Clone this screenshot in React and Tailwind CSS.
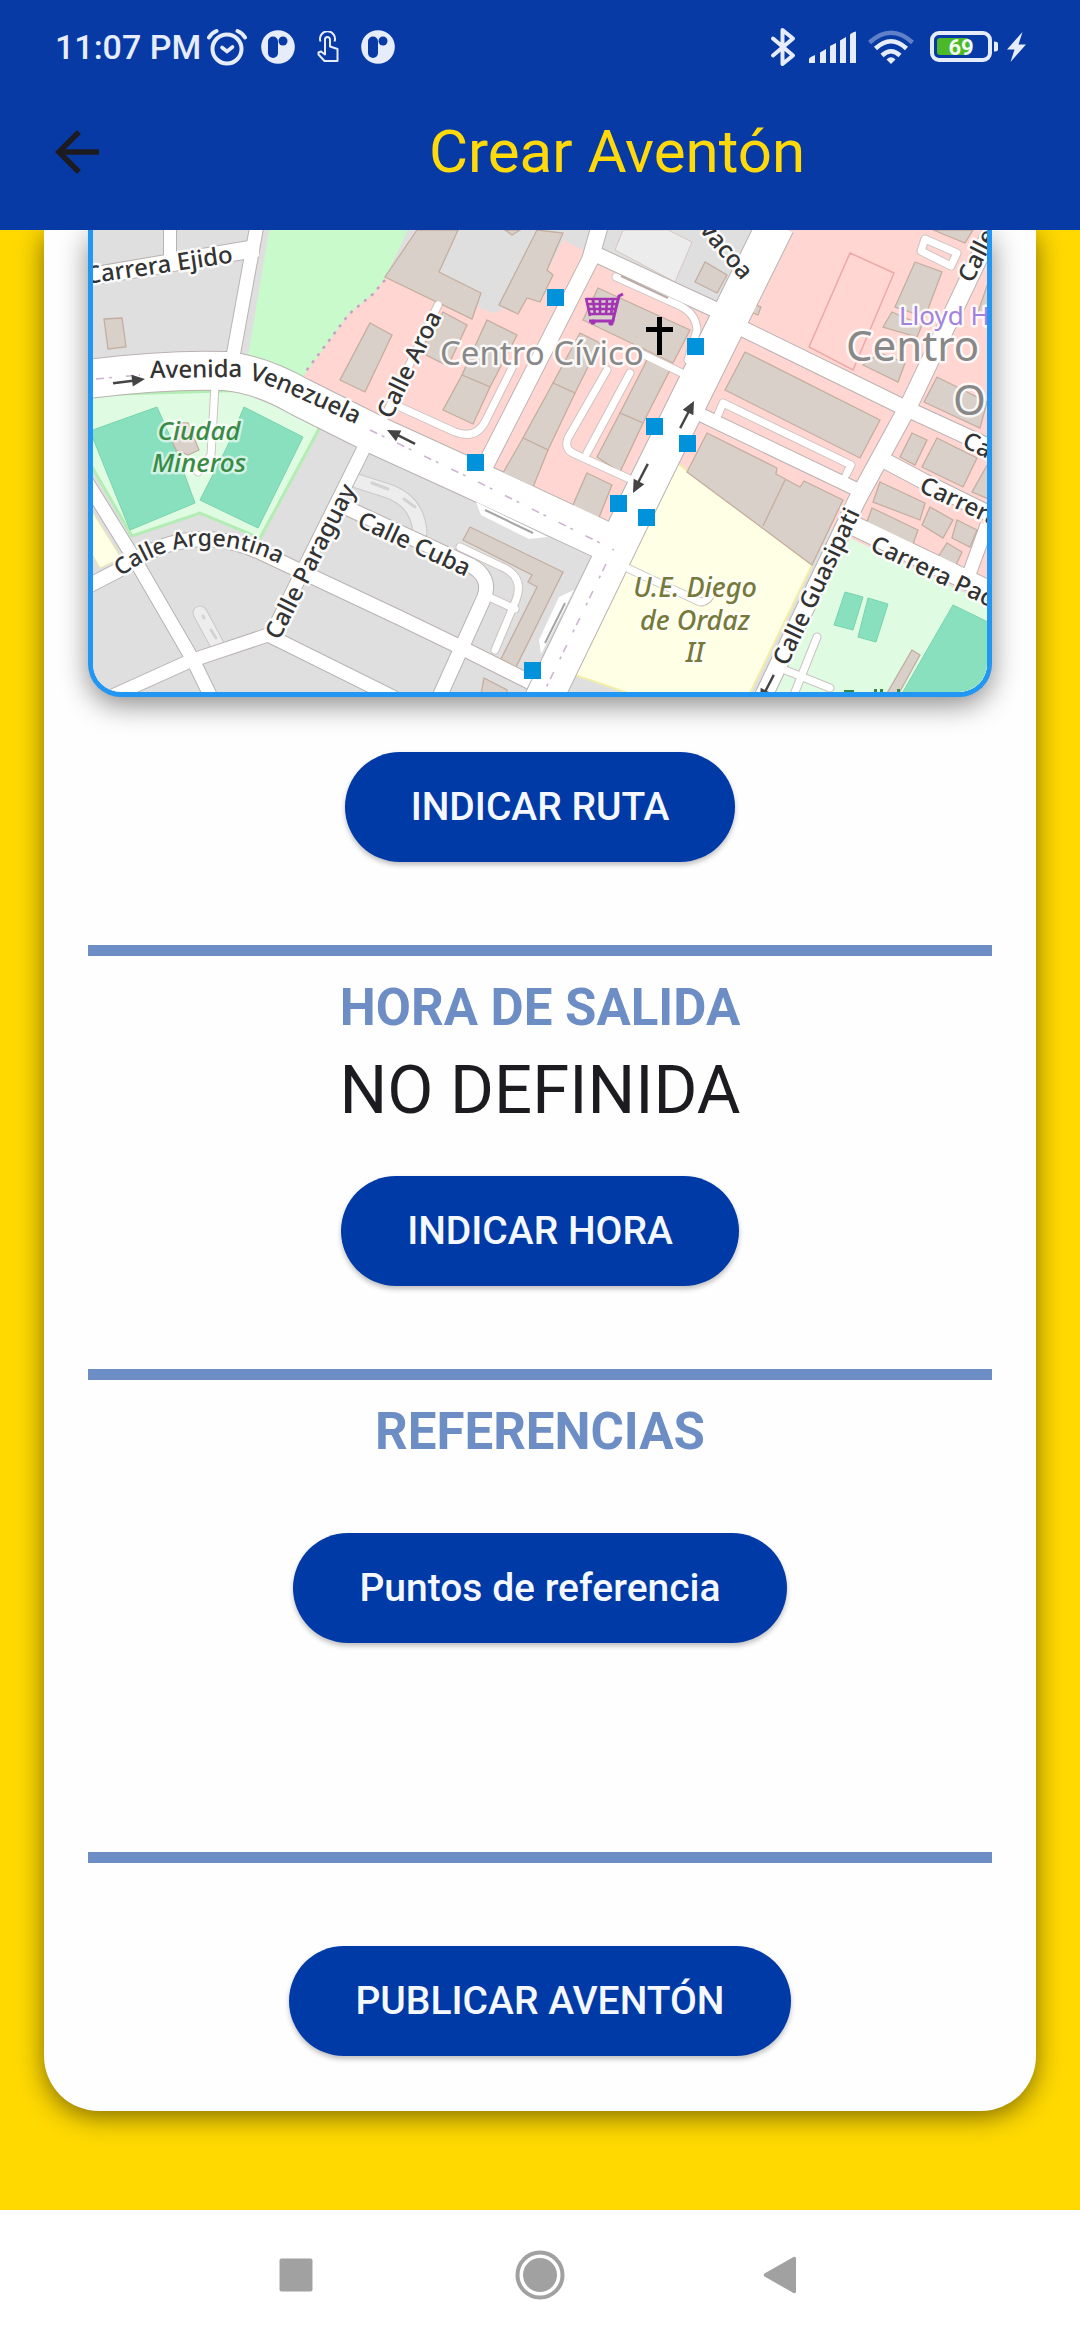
import React from "react";

const BUILDINGS = [
  "417,230 385,277 472,319 481,293 439,272 458,230",
  "537,230 563,233 547,270 553,275 540,302 527,298 518,314 499,305",
  "505,230 512,235 520,230",
  "104,319 122,318 126,347 108,349",
  "370,323 392,335 365,392 340,380",
  "443,312 467,325 448,366 420,352",
  "487,320 517,335 490,387 462,375",
  "462,375 490,387 473,424 443,410",
  "580,333 600,343 575,393 553,383",
  "553,383 575,393 548,450 523,438",
  "523,438 548,450 533,487 503,473",
  "598,288 690,330 673,363 583,320",
  "647,360 670,370 643,423 620,413",
  "620,413 643,423 620,472 597,457",
  "587,473 612,485 598,520 572,507",
  "705,262 695,282 717,293 727,275",
  "915,262 942,272 925,317 895,307",
  "892,312 922,325 917,337 883,327",
  "880,353 905,363 898,382 863,365",
  "937,377 987,402 980,428 924,402",
  "745,352 880,420 860,458 725,390",
  "912,433 927,440 915,465 900,457",
  "937,438 977,458 963,487 922,467",
  "880,482 925,503 920,520 873,502",
  "872,508 918,530 912,547 865,527",
  "930,507 953,520 943,538 922,525",
  "957,520 977,530 970,547 952,538",
  "947,543 962,552 955,567 938,557",
  "933,230 973,230 965,243",
  "989,280 989,318 978,312",
  "989,462 972,492 989,499",
  "752,304 761,307 758,315 751,312",
  "707,433 777,468 776,474 800,487 804,481 843,500 812,565 687,472",
  "470,527 563,572 516,667 501,659 537,587 528,582 532,575 463,540",
  "484,678 507,690 507,700 480,700",
  "912,650 920,655 898,695 886,695",
  "173,443 180,423 188,423 199,450 188,455 176,450",
];

const LANES = [
  "M400,407 L455,432 Q477,440 486,420 L512,368",
  "M607,370 L568,438 Q563,450 577,455 L632,480",
  "M630,373 L587,453",
  "M640,353 L682,373",
  "M616,277 L676,304 Q696,312 697,330 L688,360",
  "M717,417 L723,403 L851,465 L846,475",
  "M925,239 L957,253 L951,266 L921,251 Z",
  "M460,547 L500,566 Q525,576 516,600 L495,650",
  "M489,597 L515,609",
  "M625,567 L700,602 Q708,602 712,592",
  "M817,637 L795,692",
  "M780,668 L830,688",
  "M438,305 L382,422",
  "M215,385 L211,455 L198,472",
];

const ROADS = [
  { d: "M93,276 L258,248", w: 17 },
  { d: "M170,225 L170,262", w: 12 },
  { d: "M257,225 L232,362", w: 13 },
  { d: "M600,225 L590,260 L530,378 L482,472", w: 16 },
  { d: "M595,254 L714,309", w: 15 },
  { d: "M992,230 L910,403 L857,500 L763,697", w: 17 },
  { d: "M735,325 L905,408 L992,448", w: 15 },
  { d: "M695,412 L860,491", w: 13 },
  { d: "M876,456 L925,482 L992,515", w: 15 },
  { d: "M846,522 L992,592", w: 19 },
  { d: "M987,525 L967,580", w: 13 },
  { d: "M85,479 L135,560 L193,660 L211,697", w: 13 },
  { d: "M90,585 L117,571 Q190,518 262,553 L400,618 L460,647 L530,682", w: 14 },
  { d: "M368,440 L270,637", w: 13 },
  { d: "M108,698 L190,661 L268,635 L395,698", w: 13 },
  { d: "M347,508 L470,565 Q492,577 484,598 L438,700", w: 14 },
  {
    d: "M88,379 Q165,369 225,371 Q260,374 300,397 L380,437 L470,478 L605,541",
    w: 38,
  },
  { d: "M776,224 L651,477 L543,700", w: 37 },
];

const STOPS = [
  [547, 289],
  [687, 338],
  [646, 418],
  [679, 435],
  [467, 454],
  [610, 495],
  [638, 509],
  [524, 662],
];

const STREETS = [
  { id: "s1", d: "M87,284 L250,260", t: "Carrera Ejido" },
  { id: "s2", d: "M150,378 L238,377 Q262,379 372,432", t: "Avenida Venezuela" },
  { id: "s3", d: "M121,577 Q198,517 295,572", t: "Calle Argentina", size: 23 },
  { id: "s4", d: "M279,641 L364,474", t: "Calle Paraguay" },
  { id: "s5", d: "M356,526 L490,588", t: "Calle Cuba" },
  { id: "s6", d: "M391,420 L450,300", t: "Calle Aroa" },
  { id: "s7", d: "M787,667 L872,488", t: "Calle Guasipati" },
  { id: "s8", d: "M869,550 L1040,631", t: "Carrera Pao" },
  { id: "s9", d: "M918,491 L1060,557", t: "Carrera" },
  { id: "s10", d: "M961,446 L1060,494", t: "Carrera" },
  { id: "s11", d: "M972,284 L1020,188", t: "Calle" },
  { id: "s12", d: "M699,230 L760,303", t: "vacoa" },
];

function Arrow({ x1, y1, x2, y2 }) {
  const angle = (Math.atan2(y2 - y1, x2 - x1) * 180) / Math.PI;
  const len = Math.hypot(x2 - x1, y2 - y1);
  return (
    <g transform={`translate(${x1} ${y1}) rotate(${angle})`} fill="#444">
      <rect x="0" y="-1" width={len - 8} height="2.4" />
      <path d={`M${len} 0 L${len - 13} -6 V6 Z`} />
    </g>
  );
}

function StreetMap() {
  return (
    <svg
      viewBox="93 230 894 462"
      className="block w-full"
      role="img"
      aria-label="Mapa"
      fontFamily="'Noto Sans', sans-serif"
    >
      <rect x="93" y="230" width="894" height="462" fill="#dfdfdf" />
      <polygon
        points="270,225 248,356 303,377 350,313 375,293 386,277 410,225"
        fill="#c8facc"
      />
      <polygon
        points="386,277 375,293 350,313 303,377 373,412 605,525 710,317 597,262 583,250 563,240 545,290"
        fill="#ffd6d1"
      />
      <path
        d="M385,280 L373,294 L349,314 L303,375"
        fill="none"
        stroke="#c9a0c4"
        strokeWidth="2.5"
        strokeDasharray="3 6"
      />
      <polygon
        points="440,225 583,225 583,250 561,240 545,290 494,313 480,308 439,272"
        fill="#dfdfdf"
      />
      <polygon
        points="563,240 583,250 546,330 517,314 528,299 541,303 554,275 548,270"
        fill="#ffd6d1"
      />
      <polygon points="793,225 992,225 992,604 843,535 677,465" fill="#ffd6d1" />
      <polygon
        points="623,230 615,250 675,282 692,242 668,230"
        fill="#ececec"
        stroke="#d6c6c4"
      />
      <polygon
        points="677,463 812,565 748,697 640,697 575,675"
        fill="#ffffe5"
        stroke="#f3efa8"
        strokeWidth="2"
      />
      <polygon points="571,677 612,697 560,697" fill="#dfdfdf" />
      <polygon points="850,538 992,606 992,697 772,697" fill="#dffce2" />
      <g fill="#88e0be" stroke="#78d3ae">
        <polygon points="953,605 992,624 992,697 900,697" />
        <polygon points="845,592 863,597 853,630 834,625" />
        <polygon points="868,598 888,604 876,642 858,637" />
      </g>
      <polygon
        points="88,395 257,390 320,427 260,538 200,513 132,536 88,460"
        fill="#dffce2"
        stroke="#b3edb3"
        strokeWidth="3"
      />
      <g fill="#88e0be" stroke="#78d3ae">
        <polygon points="90,431 157,407 173,443 195,503 130,530" />
        <polygon points="244,407 303,437 258,528 200,500 227,447" />
      </g>
      <polygon
        points="90,508 121,558 100,568 90,550"
        fill="#ffffe5"
        stroke="#efe9a8"
      />
      <polygon
        points="850,253 894,273 853,370 809,347"
        fill="none"
        stroke="#eba9a9"
        strokeWidth="1.5"
      />

      <g fill="none" strokeLinecap="round" strokeLinejoin="round">
        <g stroke="#c9c9c9" strokeWidth="15">
          <path d="M357,481 L385,490 Q418,500 420,533" />
          <path d="M200,613 L220,650" />
        </g>
        <g stroke="#ededed" strokeWidth="13">
          <path d="M357,481 L385,490 Q418,500 420,533" />
          <path d="M200,613 L220,650" />
        </g>
        <g stroke="#d3d3d3" strokeWidth="3">
          <path d="M372,483 L388,489" />
          <path d="M404,499 L415,507" />
          <path d="M203,616 L204,618" />
          <path d="M211,630 L216,638" />
        </g>
        {LANES.map((d) => (
          <path key={d} d={d} stroke="#cdc3c1" strokeWidth="9" />
        ))}
      </g>
      <g fill="none" strokeLinejoin="round" stroke="#b9b2b0">
        {ROADS.map((r) => (
          <path key={r.d} d={r.d} strokeWidth={r.w + 2} />
        ))}
      </g>
      <g fill="#d9d0c9" stroke="#c4aea0" strokeWidth="1.3">
        {BUILDINGS.map((p) => (
          <polygon key={p} points={p} />
        ))}
      </g>
      <path d="M785,480 L763,526" stroke="#c4aea0" strokeWidth="1.3" />
      <g fill="none" stroke="#fff" strokeLinecap="round" strokeLinejoin="round">
        {LANES.map((d) => (
          <path key={d} d={d} strokeWidth="7" />
        ))}
      </g>
      <g fill="none" stroke="#fff" strokeLinejoin="round">
        {ROADS.map((r) => (
          <path key={r.d} d={r.d} strokeWidth={r.w} />
        ))}
      </g>
      <g fill="#fff">
        <polygon points="476,502 481,515 529,539 548,537" />
        <polygon points="574,590 559,597 539,640 541,654" />
      </g>
      <g stroke="#a5a5a5" strokeWidth="2">
        <path d="M485,510 L533,533" />
        <path d="M565,603 L545,643" />
        <path d="M621,276 L668,298" stroke="#bcaaa8" />
      </g>
      <g fill="none" stroke="#cdb4d3" strokeWidth="1.6" strokeDasharray="8 5 3 14">
        <path d="M96,379 L140,375" />
        <path d="M370,430 L470,478 L614,550" />
        <path d="M606,564 L543,694" />
      </g>

      <Arrow x1={113} y1={383} x2={145} y2={379} />
      <Arrow x1={415} y1={444} x2={387} y2={430} />
      <Arrow x1={680} y1={428} x2={694} y2={401} />
      <Arrow x1={648} y1={464} x2={633} y2={493} />
      <Arrow x1={774} y1={675} x2={760} y2={702} />

      <g fill="#0092da">
        {STOPS.map(([x, y]) => (
          <rect key={`${x}-${y}`} x={x} y={y} width="17" height="17" />
        ))}
      </g>
      <path d="M657 317h5v10h11v5h-11v23h-5v-23h-11v-5h11z" fill="#000" />
      <g fill="none" stroke="#a335b5" strokeWidth="2.6">
        <path d="M586 299H618M587 304H616M589 309H615M590 314H614" />
        <path d="M586 298L590 316M593 299L595 315M600 299V315M607 299L606 315M613 299L611 315" />
        <path d="M623 294L619 296L614 316L613 321H589" strokeWidth="3" />
      </g>
      <circle cx="593" cy="322" r="2.6" fill="#a335b5" />
      <circle cx="611" cy="323" r="2.6" fill="#a335b5" />

      <g stroke="#fff" strokeOpacity="0.85" strokeWidth="5" paintOrder="stroke" strokeLinejoin="round">
        <g fill="#333" fontWeight="500">
          {STREETS.map((s) => (
            <g key={s.id}>
              <path id={s.id} d={s.d} fill="none" stroke="none" />
              <text fontSize={s.size || 24}>
                <textPath href={`#${s.id}`}>{s.t}</textPath>
              </text>
            </g>
          ))}
        </g>
        <g fill="#3a8a45" fontSize="26" fontWeight="500" fontStyle="italic" textAnchor="middle" strokeOpacity="0.6">
          <text x="199" y="440">Ciudad</text>
          <text x="199" y="472">Mineros</text>
        </g>
        <g fill="#76793a" fontSize="27" fontWeight="500" fontStyle="italic" textAnchor="middle" strokeOpacity="0.6">
          <text x="695" y="597">U.E. Diego</text>
          <text x="695" y="630">de Ordaz</text>
          <text x="695" y="662">II</text>
        </g>
        <text x="899" y="325" fontSize="26" fill="#a283db">
          Lloyd H
        </text>
        <g fill="#888">
          <text x="440" y="365" fontSize="33">
            Centro Cívico
          </text>
          <text x="846" y="361" fontSize="42">
            Centro
          </text>
          <text x="953" y="415" fontSize="42">
            O
          </text>
        </g>
      </g>
      <g fill="#2f8a45">
        <rect x="844" y="690" width="10" height="2" />
        <rect x="874" y="689" width="3" height="3" />
        <rect x="880" y="689" width="3" height="3" />
        <rect x="897" y="689" width="3" height="3" />
      </g>
    </svg>
  );
}

function AlarmIcon() {
  return (
    <svg viewBox="0 0 40 38" className="h-[38px] w-10" fill="none" stroke="currentColor" strokeLinecap="round">
      <circle cx="20" cy="21" r="14.5" strokeWidth="4" />
      <path d="M2 9.500Q4.500 5 9.500 3M38 9.500Q35.500 5 30.500 3" strokeWidth="4" />
      <path d="M15 19.500L20 23.500L25.500 19" strokeWidth="3.600" />
    </svg>
  );
}

function ParkIcon() {
  return (
    <svg viewBox="0 0 34 34" className="size-[34px]">
      <circle cx="17" cy="17" r="16.800" fill="currentColor" />
      <rect x="7" y="6.500" width="10" height="21.500" rx="5" fill="#083aa5" />
      <circle cx="22" cy="11" r="4.500" fill="#083aa5" />
    </svg>
  );
}

function TouchIcon() {
  return (
    <svg viewBox="0 0 22 32" className="h-8 w-[22px]" fill="none" stroke="currentColor" strokeWidth="2" strokeLinejoin="round">
      <path d="M3.500 10.500A7.500 7.500 0 1 1 17.500 10.500" />
      <path d="M8 21.500V8.500a2.500 2.500 0 0 1 5 0V15.500L20.500 18V30H7.500L1.500 23.500V21.500L4 20.500L8 23.500Z" />
    </svg>
  );
}

function StatusBar() {
  return (
    <div className="flex h-[94px] items-center justify-between pr-[54px] pl-[55px] text-[#e6ecfa]">
      <div className="flex items-center">
        <span className="text-[34px] leading-10 font-medium">11:07 PM</span>
        <span className="ml-1.5 flex items-center">
          <AlarmIcon />
        </span>
        <span className="ml-[14px] flex items-center gap-[22px]">
          <ParkIcon />
          <TouchIcon />
          <ParkIcon />
        </span>
      </div>
      <div className="flex items-center">
        <svg viewBox="0 0 26 40" className="h-10 w-[26px]" fill="none" stroke="currentColor" strokeWidth="4" strokeLinejoin="round" strokeLinecap="round">
          <path d="M3 11.500L23 28.500L12.500 37V3L23 11.500L3 28.500" />
        </svg>
        <svg viewBox="0 0 48 32" className="ml-3 h-8 w-12" fill="currentColor">
          <path d="M1 32V28Q1 26.500 7 24V32Z" />
          <path d="M12 32V21.500L18 18V32Z" />
          <path d="M22 32V15L28 12V32Z" />
          <path d="M32 32V9.500L38 6V32Z" />
          <path d="M42 32V4Q42 2 48 .500V32Z" />
        </svg>
        <svg viewBox="0 0 46 34" className="ml-3 h-[34px] w-[46px]" fill="none" stroke="currentColor" strokeWidth="4.500">
          <path d="M1.500 12.500Q23 -7 44.500 12.500" opacity="0.400" />
          <path d="M7.500 18.500Q23 4 38.500 18.500" />
          <path d="M14 25.500Q23 17 32 25.500" />
          <path d="M23 34L18.500 29.500Q23 25 27.500 29.500Z" fill="currentColor" stroke="none" />
        </svg>
        <svg viewBox="0 0 70 32" className="ml-4 h-8 w-[70px]">
          <rect x="2" y="2" width="58" height="27" rx="7" fill="none" stroke="currentColor" strokeWidth="4" />
          <rect x="7" y="7" width="32" height="17" rx="3" fill="#4db928" />
          <path d="M64 10.500q4 0 4 2v6q0 2-4 2z" fill="currentColor" />
          <text x="31" y="23.500" textAnchor="middle" fontSize="22" fontWeight="700" fill="#f2fbf0" fontFamily="Roboto, sans-serif">
            69
          </text>
        </svg>
        <svg viewBox="0 0 20 32" className="ml-1.5 h-8 w-5" fill="currentColor">
          <path d="M16.500 1L1 18.500H8.500L4.500 31L20 13.500H12.500Z" />
        </svg>
      </div>
    </div>
  );
}

function AppBar() {
  return (
    <div className="flex h-[136px] items-center px-11 pb-5">
      <button type="button" aria-label="Volver" className="text-[#1c1b1f]">
        <svg viewBox="0 0 24 24" className="size-[66px]" fill="currentColor">
          <path d="M20 11H7.830l5.590-5.590L12 4l-8 8 8 8 1.410-1.410L7.830 13H20v-2z" />
        </svg>
      </button>
      <h1 className="flex-1 pl-[88px] text-center text-[60px] leading-[72px] text-[#ffd90a]">
        Crear Aventón
      </h1>
    </div>
  );
}

function PillButton({ children }) {
  return (
    <button
      type="button"
      className="h-[110px] rounded-full bg-[#003aa6] px-[66px] text-[39px] font-medium text-[#f5f8ff] shadow-[0_3px_5px_rgba(0,0,0,0.25)]"
    >
      {children}
    </button>
  );
}

function Divider() {
  return <hr className="h-[11px] w-full border-0 bg-[#6d8dc5]" />;
}

function SectionTitle({ children }) {
  return (
    <h2 className="mt-[22px] text-[51px] leading-[60px] font-bold text-[#6d8dc5]">
      {children}
    </h2>
  );
}

export default function App() {
  return (
    <div className="flex min-h-screen flex-col bg-[#ffd900] font-['Roboto',sans-serif]">
      <header className="bg-[#083aa5]">
        <StatusBar />
        <AppBar />
      </header>

      <main className="flex-1 overflow-hidden px-11 pb-11">
        <div className="flex flex-col items-center rounded-b-[55px] bg-[#fefefe] px-11 pb-[55px] shadow-[0_6px_26px_rgba(0,0,0,0.5)]">
          <div className="w-full overflow-hidden rounded-b-[33px] border-x-5 border-b-5 border-[#2196f3] bg-white shadow-[0_8px_28px_rgba(0,0,0,0.45)]">
            <StreetMap />
          </div>
          <div className="mt-[55px] mb-[83px]">
            <PillButton>INDICAR RUTA</PillButton>
          </div>

          <Divider />
          <SectionTitle>HORA DE SALIDA</SectionTitle>
          <p className="mt-3 text-[67px] leading-[80px] text-[#1c1b1f]">NO DEFINIDA</p>
          <div className="mt-[46px] mb-[83px]">
            <PillButton>INDICAR HORA</PillButton>
          </div>

          <Divider />
          <SectionTitle>REFERENCIAS</SectionTitle>
          <div className="mt-[71px] mb-[209px]">
            <PillButton>Puntos de referencia</PillButton>
          </div>

          <Divider />
          <div className="mt-[83px]">
            <PillButton>PUBLICAR AVENTÓN</PillButton>
          </div>
        </div>
      </main>

      <nav className="flex h-[130px] items-center justify-center gap-[194px] bg-white text-[#a1a1a1]">
        <button type="button" aria-label="Recientes">
          <svg viewBox="0 0 50 50" className="size-[50px]" fill="currentColor">
            <rect x="8.500" y="8.500" width="33" height="33" rx="2" />
          </svg>
        </button>
        <button type="button" aria-label="Inicio">
          <svg viewBox="0 0 50 50" className="size-[50px]">
            <circle cx="25" cy="25" r="22.500" fill="none" stroke="currentColor" strokeWidth="4" />
            <circle cx="25" cy="25" r="17" fill="currentColor" />
          </svg>
        </button>
        <button type="button" aria-label="Atrás">
          <svg viewBox="0 0 50 50" className="size-[50px]" fill="currentColor">
            <path d="M5.500 26.500Q4 25 5.500 23.500L34.500 7Q37 6 37 8.500V41.500Q37 44 34.500 43Z" />
          </svg>
        </button>
      </nav>
    </div>
  );
}
